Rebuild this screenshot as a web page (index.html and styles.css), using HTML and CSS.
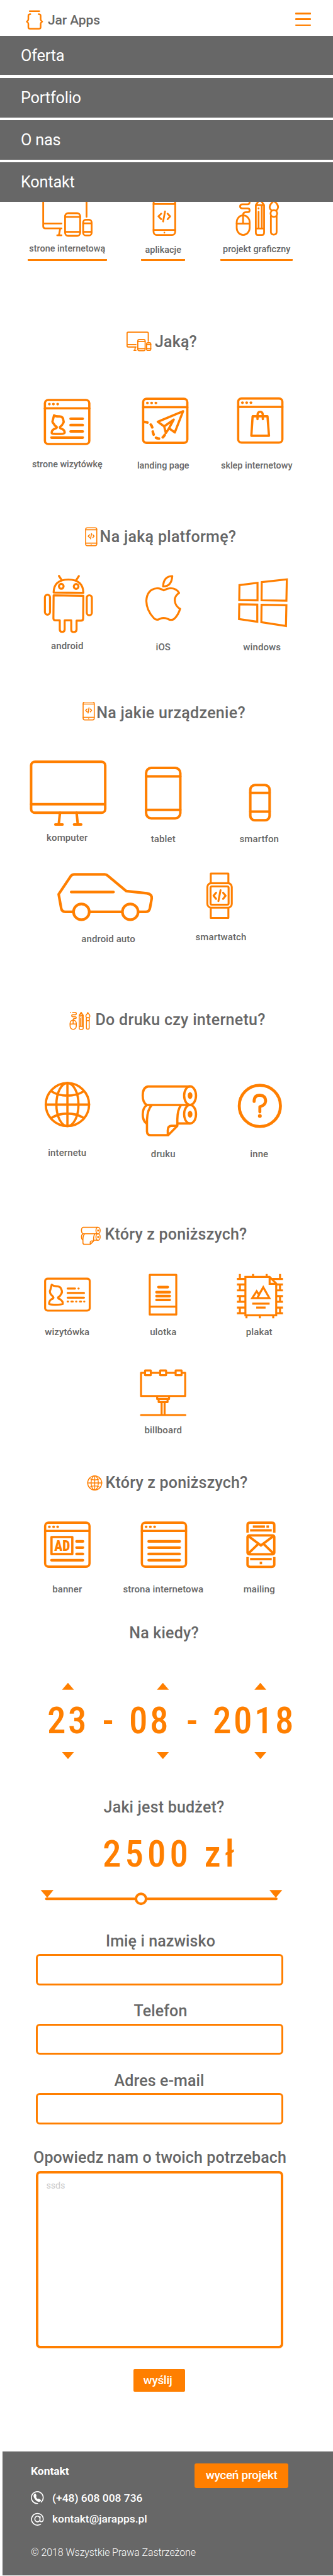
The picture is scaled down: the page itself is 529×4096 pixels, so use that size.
FILE: index.html
```
<!DOCTYPE html>
<html lang="pl">
<head>
<meta charset="utf-8">
<title>Jar Apps</title>
<link rel="stylesheet" href="styles.css">
</head>
<body>
<header class="top">
  <svg class="logo" viewBox="55 35 130 145"><g stroke-width="11"><path d="M86 47H153"/><path d="M91 68Q77 68 77 80V104Q77 113 66 119Q77 125 77 134V158Q77 169 89 169H150Q162 169 162 158V134Q162 125 173 119Q162 113 162 104V80Q162 68 148 68"/></g></svg>
  <span class="brand">Jar Apps</span>
  <span class="burger"><i></i><i></i><i></i></span>
</header>
<nav class="menu">
  <a>Oferta</a>
  <a>Portfolio</a>
  <a>O nas</a>
  <a>Kontakt</a>
</nav>
<main>
  <div class="row row-what">
    <figure>
      <svg viewBox="90.4 1142 452 208" preserveAspectRatio="none"><g id="devices"><path d="M288 1292H212Q202 1292 202 1280V1132Q202 1120 212 1120H396Q406 1120 406 1132V1226M202 1264H288M282 1292L276 1330M268 1331H288"/><rect x="305" y="1206" width="71" height="128" rx="14" ry="18"/><path d="M305 1227H376M305 1311H376"/><rect x="390" y="1243" width="40" height="89" rx="12" ry="16"/><path d="M390 1263H430M390 1311H430"/></g></svg>
      <figcaption class="w1">strone internetową</figcaption>
    </figure>
    <figure>
      <svg viewBox="542.4 1142 452 208" preserveAspectRatio="none"><g id="app"><rect x="723" y="1132" width="102" height="197" rx="14" ry="18"/><path d="M723 1154H825M723 1301H825M759 1209L746 1224L759 1240M777 1196L768 1253M789 1209L801 1224L789 1240"/><ellipse class="dot" cx="774" cy="1316" rx="4" ry="5"/></g></svg>
      <figcaption class="w2">aplikacje</figcaption>
    </figure>
    <figure>
      <svg viewBox="994.4 1142 452 208" preserveAspectRatio="none"><g id="tools"><rect x="1113" y="1218" width="61" height="111" rx="30.500" ry="40"/><path d="M1113 1265H1174M1143 1265V1218Q1143 1200 1156 1200H1164Q1174 1200 1174 1190Q1174 1179 1164 1179H1140Q1129 1179 1129 1168Q1129 1156 1140 1156H1164Q1174 1156 1174 1142Q1174 1127 1164 1127H1138M1117 1127H1119"/><path d="M1203 1160L1222 1127L1242 1160V1314Q1242 1329 1232 1329H1213Q1203 1329 1203 1314ZM1203 1160H1242M1203 1293H1242M1231 1162V1292M1216 1198V1292M1216 1178V1180"/><path d="M1277 1190Q1267 1180 1268 1170Q1270 1155 1282 1143Q1288 1135 1288 1127Q1288 1140 1298 1147Q1308 1160 1308 1172Q1307 1183 1299 1192"/><ellipse cx="1288" cy="1208" rx="15.500" ry="19"/><path d="M1274 1222V1312Q1274 1327 1287.500 1327Q1301 1327 1301 1312V1222"/></g></svg>
      <figcaption class="w3">projekt graficzny</figcaption>
    </figure>
  </div>

  <h2 class="h-which"><svg viewBox="590 103 130 156.900" preserveAspectRatio="none"><use href="#devices" transform="matrix(.489 0 0 .597 499.700 -556.200)"/></svg>Jaką?</h2>
  <div class="row row-which">
    <figure>
      <svg viewBox="90.4 555 452 345" preserveAspectRatio="none"><rect x="210" y="581" width="209" height="305" rx="16" ry="22"/><path d="M210 639H419"/><g class="dot"><ellipse cx="231" cy="610" rx="6.500" ry="9"/><ellipse cx="250" cy="610" rx="6.500" ry="9"/><ellipse cx="270" cy="610" rx="6.500" ry="9"/></g><path d="M253 687L247 722Q243 735 251 745Q256 760 264 766Q269 772 262 777Q241 786 242 808Q242 815 250 815Q272 818 294 815Q303 813 303 806Q303 786 283 777Q278 772 282 766Q292 757 294 746Q301 735 297 723Q296 695 278 695Q260 696 253 687Z"/><path class="bold" d="M331 711H388M331 755H388M331 799H388M241 842H388"/></svg>
      <figcaption>strone wizytówkę</figcaption>
    </figure>
    <figure>
      <svg viewBox="542.4 555 452 345" preserveAspectRatio="none"><rect x="674" y="573" width="208" height="305" rx="16" ry="22"/><path d="M674 631H882"/><g class="dot"><ellipse cx="694" cy="602" rx="6.500" ry="9"/><ellipse cx="714" cy="602" rx="6.500" ry="9"/><ellipse cx="734" cy="602" rx="6.500" ry="9"/></g><path d="M862 659L743 732L773 764L781 810L796 777L823 806ZM773 764L818 717L796 777"/><path class="bold dash" d="M679 733Q717 738 718 785Q722 848 748 849Q770 848 779 812"/></svg>
      <figcaption>landing page</figcaption>
    </figure>
    <figure>
      <svg viewBox="994.4 555 452 345" preserveAspectRatio="none"><rect x="1120" y="571" width="208" height="305" rx="16" ry="22"/><path d="M1120 629H1328"/><g class="dot"><ellipse cx="1140" cy="600" rx="6.500" ry="9"/><ellipse cx="1160" cy="600" rx="6.500" ry="9"/><ellipse cx="1180" cy="600" rx="6.500" ry="9"/></g><path d="M1188 694H1258L1265 829H1182ZM1211 714V688Q1211 663 1224 663Q1236 663 1236 688V714"/></svg>
      <figcaption class="shop">sklep internetowy</figcaption>
    </figure>
  </div>

  <h2 class="h-platform"><svg viewBox="395 102.600 72 156.900" preserveAspectRatio="none"><use href="#app" transform="matrix(.514 0 0 .629 32.400 -595.500)"/></svg>Na jaką platformę?</h2>
  <div class="row row-platform">
    <figure>
      <svg viewBox="90.4 440 452 415" preserveAspectRatio="none"><path d="M251 567Q252 478 320 477Q390 478 391 569ZM276 452L289 481M370 453L357 482"/><ellipse cx="287" cy="524" rx="11" ry="17"/><ellipse cx="357" cy="525" rx="11" ry="17"/><path d="M251 587L391 590L390 746Q390 762 380 762H359V824Q358 841 346 841Q334 841 334 826V760H303V824Q303 840 291 840Q280 840 280 824V760H260Q250 760 250 746Z"/><rect x="210" y="582" width="24" height="139" rx="12" ry="18"/><rect x="407" y="586" width="24" height="139" rx="12" ry="18"/></svg>
      <figcaption>android</figcaption>
    </figure>
    <figure>
      <svg viewBox="542.4 440 452 415" preserveAspectRatio="none"><path d="M811 453Q770 455 768 525Q808 525 811 453Z"/><path d="M771 552Q788 538 803 537Q832 539 843 570Q822 592 823 622Q825 662 848 680Q840 722 820 750Q806 764 790 750Q771 738 752 750Q736 764 724 744Q690 690 689 625Q692 545 738 538Q752 537 771 552Z"/></svg>
      <figcaption>iOS</figcaption>
    </figure>
    <figure>
      <svg viewBox="994.4 440 452 415" preserveAspectRatio="none"><path class="sharp" d="M1126 516L1211 500V621L1125 619ZM1231 495L1349 476L1347 624L1230 621ZM1125 649L1210 651V770L1124 751ZM1230 652L1347 655L1345 799L1229 773Z"/></svg>
      <figcaption>windows</figcaption>
    </figure>
  </div>

  <h2 class="h-device"><svg viewBox="382 1324.300 72 156.900" preserveAspectRatio="none"><use href="#app" transform="matrix(.514 0 0 .629 19.400 613.500)"/></svg>Na jakie urządzenie?</h2>
  <div class="row row-device">
    <figure>
      <svg viewBox="90.4 205 452 440" preserveAspectRatio="none"><rect x="145" y="222" width="349" height="330" rx="18" ry="24"/><path d="M145 497H494M281 552L275 628M359 552L365 628M259 628H293M347 628H381"/></svg>
      <figcaption>komputer</figcaption>
    </figure>
    <figure>
      <svg viewBox="542.4 205 452 440" preserveAspectRatio="none"><rect x="688" y="262" width="161" height="326" rx="24" ry="33"/><path d="M688 317H849M688 533H849"/></svg>
      <figcaption>tablet</figcaption>
    </figure>
    <figure>
      <svg viewBox="994.4 205 452 440" preserveAspectRatio="none"><rect x="1177" y="373" width="91" height="228" rx="22" ry="30"/><path d="M1177 424H1268M1177 545H1268"/></svg>
      <figcaption>smartfon</figcaption>
    </figure>
  </div>
  <div class="row row-extra">
    <figure>
      <svg viewBox="230 930 560 330" preserveAspectRatio="none"><path d="M344 1194H306Q290 1194 287 1172L275 1080L331 965Q338 952 348 952H492Q500 952 506 960L593 1060L690 1074Q715 1080 713 1108L705 1168Q702 1194 685 1194H650M420 1194H574M334 1066H533"/><ellipse cx="382" cy="1194" rx="37" ry="51"/><ellipse cx="612" cy="1194" rx="37" ry="51"/></svg>
      <figcaption>android auto</figcaption>
    </figure>
    <figure>
      <svg class="thin" viewBox="790 930 500 330" preserveAspectRatio="none"><rect x="975" y="1009" width="115" height="158" rx="18" ry="24"/><rect x="990" y="1030" width="85" height="118" rx="6" ry="8"/><path d="M991 1006V946H1074V1006M991 1172V1233H1074V1172M1016 1070L1004 1090L1016 1110M1037 1054L1027 1124M1049 1070L1061 1090L1049 1110"/></svg>
      <figcaption>smartwatch</figcaption>
    </figure>
  </div>

  <h2 class="h-print"><svg viewBox="320 90.600 120 156.900" preserveAspectRatio="none"><use href="#tools" transform="matrix(.478 0 0 .586 -202.100 -545.100)"/></svg>Do druku czy internetu?</h2>
  <div class="row row-print">
    <figure>
      <svg viewBox="90.4 585 452 395" preserveAspectRatio="none"><g id="globe"><ellipse cx="316" cy="752" rx="102" ry="149"/><ellipse cx="316" cy="752" rx="52" ry="149"/><path d="M316 603V901M214 752H418M240 660Q272 690 316 690Q360 690 393 660M240 845Q272 814 316 814Q360 814 393 845"/></g></svg>
      <figcaption>internetu</figcaption>
    </figure>
    <figure>
      <svg viewBox="542.4 585 452 395" preserveAspectRatio="none"><g id="rolls"><path d="M895 627H697Q672 632 672 690Q672 737 690 755H895M895 883H836M690 883Q672 865 672 819Q673 772 692 755M714 757Q692 790 692 870V938Q693 964 710 964H792L835 900V870Q834 790 852 757M790 964V930Q790 900 806 899H834"/><ellipse cx="895" cy="690" rx="28" ry="64"/><ellipse cx="895" cy="819" rx="28" ry="64"/><g class="dot"><ellipse cx="895" cy="690" rx="11" ry="24"/><ellipse cx="895" cy="819" rx="11" ry="24"/></g></g></svg>
      <figcaption>druku</figcaption>
    </figure>
    <figure>
      <svg class="thick" viewBox="994.4 585 452 395" preserveAspectRatio="none"><ellipse cx="1222" cy="761" rx="97" ry="143"/><path d="M1195 731Q1195 687 1222 687Q1250 690 1249 730Q1247 758 1222 767V803"/><ellipse class="dot" cx="1222" cy="831" rx="9" ry="13"/></svg>
      <figcaption>inne</figcaption>
    </figure>
  </div>

  <h2 class="h-paper"><svg viewBox="374 71.200 108 146.400" preserveAspectRatio="none"><use href="#rolls" transform="matrix(.351 0 0 .325 148.200 -105.900)"/></svg>Który z poniższych?</h2>
  <div class="row row-paper">
    <figure>
      <svg viewBox="90.4 385 452 305" preserveAspectRatio="none"><rect x="211" y="426" width="210" height="207" rx="12" ry="15"/><path d="M242 465L236 497Q230 510 238 528Q247 540 250 547Q252 554 240 560Q229 570 230 590Q240 595 262 595Q286 595 294 590Q296 572 282 560Q270 554 272 547Q282 540 286 527Q294 513 288 498Q285 475 262 475Q250 475 242 465Z"/><path d="M317 490H352M368 490H369M317 519H394M317 549H394M317 574H319M335 574H341M357 574H358M375 574H380M395 574H395.500"/></svg>
      <figcaption>wizytówka</figcaption>
    </figure>
    <figure>
      <svg viewBox="542.4 385 452 305" preserveAspectRatio="none"><path d="M705 402H830V658H705ZM705 607H830"/><path class="bold" d="M746 481H790M737 514H799M737 539H799M737 564H799"/></svg>
      <figcaption>ulotka</figcaption>
    </figure>
    <figure>
      <svg class="butt" viewBox="994.4 385 452 305" preserveAspectRatio="none"><path d="M1114 428H1154M1114 464H1154M1114 502H1154M1114 539H1154M1114 576H1154M1114 613H1154M1114 650H1154M1128 396V428M1128 464V502M1128 539V576M1128 613V650M1190 396V415M1254 396V415M1317 396V428M1280 428H1331M1299 464H1331M1299 502H1331M1299 539H1331M1299 576H1331M1299 613H1331M1299 650H1331M1317 464V502M1317 539V576M1317 613V650M1159 664V683M1222 664V683M1285 664V683"/><path d="M1154 415H1268L1299 458V663H1154ZM1268 415V460H1299M1186 552L1207 508L1218 530L1238 482L1267 552ZM1211 548L1219 530"/><path d="M1186 588H1268M1205 613H1249"/></svg>
      <figcaption>plakat</figcaption>
    </figure>
  </div>
  <div class="row row-board">
    <figure>
      <svg viewBox="542.4 1005 452 320" preserveAspectRatio="none"><path d="M682 1037H664V1187H872V1037H855M712 1037H752M784 1037H824M683 1022H710V1052H683ZM754 1022H782V1052H754ZM827 1022H855V1052H827ZM740 1190V1206H796V1190M747 1208V1226H789V1208M761 1228V1308M775 1228V1308M664 1310H873"/></svg>
      <figcaption>billboard</figcaption>
    </figure>
  </div>

  <h2 class="h-web"><svg viewBox="402 54.500 86 156.900" preserveAspectRatio="none"><use href="#globe" transform="matrix(.326 0 0 .33 341.900 -115.400)"/></svg>Który z poniższych?</h2>
  <div class="row row-web">
    <figure>
      <svg viewBox="90.4 392 452 340" preserveAspectRatio="none"><rect x="211" y="410" width="209" height="305" rx="16" ry="22"/><path d="M211 467H420M241 510H339V628H241Z"/><g class="dot"><ellipse cx="231" cy="439" rx="6.500" ry="9"/><ellipse cx="251" cy="439" rx="6.500" ry="9"/><ellipse cx="270" cy="439" rx="6.500" ry="9"/></g><path class="bold" d="M359 540H389M359 583H389M359 627H389M241 670H389"/><text transform="translate(291 606) scale(2.964 4.357)" text-anchor="middle" textLength="25" lengthAdjust="spacingAndGlyphs">AD</text></svg>
      <figcaption>banner</figcaption>
    </figure>
    <figure>
      <svg viewBox="542.4 392 452 340" preserveAspectRatio="none"><rect x="668" y="410" width="208" height="305" rx="16" ry="22"/><path d="M668 467H876"/><g class="dot"><ellipse cx="688" cy="439" rx="6.500" ry="9"/><ellipse cx="708" cy="439" rx="6.500" ry="9"/><ellipse cx="728" cy="439" rx="6.500" ry="9"/></g><path class="bold" d="M700 540H846M700 583H846M700 627H846M700 670H846"/></svg>
      <figcaption>strona internetowa</figcaption>
    </figure>
    <figure>
      <svg class="butt" viewBox="994.4 392 452 340" preserveAspectRatio="none"><path d="M1164 479V425Q1164 410 1176 410H1278Q1290 410 1290 425V479M1189 437H1246M1253 437H1265M1176 463H1278M1168 503L1227 568L1286 503M1168 624L1214 558M1286 624L1240 558M1164 648V702Q1164 716 1176 716H1278Q1290 716 1290 702V648M1176 663H1278M1227 681V698"/><rect x="1164" y="498" width="126" height="131" rx="8" ry="11"/></svg>
      <figcaption>mailing</figcaption>
    </figure>
  </div>

  <h2 class="h-plain">Na kiedy?</h2>
  <div class="date">
    <div class="steps up"><i></i><i></i><i></i></div>
    <div class="digits"><span>23</span><span>-</span><span>08</span><span>-</span><span>2018</span></div>
    <div class="steps down"><i></i><i></i><i></i></div>
  </div>

  <h2 class="h-plain">Jaki jest budżet?</h2>
  <div class="price">2500 zł</div>
  <svg class="slider" viewBox="0 0 529 30.600"><path d="M73.500 17.300H439"/><circle cx="224" cy="17.300" r="8"/><path class="dot" d="M64.500 3.200H85L75 15.500ZM428 3.200H448.500L438.200 15.500Z"/></svg>

  <form>
    <label class="f-name" for="name">Imię i nazwisko</label>
    <input id="name" type="text">
    <label class="f-phone" for="phone">Telefon</label>
    <input id="phone" type="text">
    <label class="f-mail" for="mail">Adres e-mail</label>
    <input id="mail" type="text">
    <label class="f-needs" for="needs">Opowiedz nam o twoich potrzebach</label>
    <div id="needs" class="area">ssds</div>
    <button type="button">wyślij</button>
  </form>
</main>
<footer>
  <div class="contact">
    <h3>Kontakt</h3>
    <p><svg viewBox="0 0 21 21"><path d="M10.800 19.700A9.400 9.400 0 1 1 16.500 17.300"/><path class="dot" d="M6 4.300Q7.700 3.500 8.300 5.500L9 7.500Q9.200 8.400 8.200 9Q8.800 11.300 11 12.800Q12 11.600 13 12.200L15.600 13.700Q17 15 15.400 16.200Q13 18 9.600 15.900Q5.800 13.300 4.500 9.300Q3.700 5.800 6 4.300Z"/></svg>(+48) 608 008 736</p>
    <p><svg viewBox="0 0 21 21"><path d="M15.500 18.600A9.300 9.300 0 1 1 19.700 10.500Q19.500 14.800 16.600 14.800Q14.300 14.700 14.400 12L14.800 6.800M14.500 9.500A4.100 4.600 0 1 0 13.800 13"/></svg>kontakt@jarapps.pl</p>
    <small>© 2018 Wszystkie Prawa Zastrzeżone</small>
  </div>
  <a class="cta">wyceń projekt</a>
</footer>
</body>
</html>
```
FILE: styles.css
```
* { box-sizing: border-box; }
body {
  margin: 0;
  width: 529px;
  height: 4096px;
  overflow: hidden;
  background: #fff;
  color: #676767;
  font-family: Roboto, sans-serif;
  font-weight: 500;
}
svg {
  display: block;
  overflow: hidden;
  fill: none;
  stroke: #ff7f00;
  stroke-width: 3.6px;
  stroke-linecap: round;
  stroke-linejoin: round;
}
main path, main rect, main ellipse { vector-effect: non-scaling-stroke; }
.dot { fill: #ff7f00; stroke: none; }
.bold { stroke-width: 4.2px; }
.dash { stroke-dasharray: 5 6.5; }
.sharp { stroke-linejoin: miter; }
.butt { stroke-width: 3.3px; stroke-linecap: butt; stroke-linejoin: miter; }
.thin { stroke-width: 3.1px; }
.thick { stroke-width: 4.7px; }
svg text {
  fill: #ff7f00;
  stroke: none;
  font-family: "Roboto Condensed", Roboto, sans-serif;
  font-size: 24px;
  font-weight: 900;
}

/* header */
.top {
  display: flex;
  align-items: flex-start;
  height: 56.5px;
  padding: 14.9px 35.500px 0 40.200px;
}
.logo { width: 29.800px; height: 33.300px; }
.brand {
  margin: 5.600px 0 0 6px;
  font-size: 21px;
  line-height: 24px;
  letter-spacing: -.1px;
}
.burger { display: grid; gap: 6.200px; margin: 5.500px 0 0 auto; }
.burger i { width: 25px; height: 2.900px; border-radius: 1px; background: #ff7f00; }
.menu { display: grid; gap: 4.200px; height: 264.4px; }
.menu a {
  width: 528.500px;
  height: 62.950px;
  padding-left: 33px;
  background: #676767;
  color: #fff;
  font-size: 25.300px;
  font-weight: 400;
  line-height: 64px;
  letter-spacing: -.2px;
}

/* questionnaire: one band per row */
main {
  display: grid;
  grid-template-rows:
    205.3px 103.8px 206px 77.4px 203px 90.7px 178.3px 219px 113.5px 227.5px
    77.2px 152.4px 164.7px 77.5px 161.4px 97.2px 180.3px 56.6px 89.1px 67.5px 829.2px;
}
.row {
  display: grid;
  grid-template-columns: repeat(3, 152.500px);
  align-items: start;
  padding-left: 30.500px;
}
figure { margin: 0; }
figure svg { width: 100%; }
figcaption {
  margin-top: var(--gap);
  font-size: 15px;
  line-height: 20px;
  letter-spacing: .1px;
  text-align: center;
  white-space: nowrap;
}
figure + figure figcaption { margin-top: calc(var(--gap) + 1.500px); }

.row-what { --gap: 0px; }
.row-what svg { height: 58.5px; stroke-width: 2.800px; }
.row-what figcaption, .row-what figure + figure figcaption {
  height: 35.400px;
  margin: 0 auto;
  padding-top: 7px;
  border-bottom: 3.600px solid #ff7f00;
  border-radius: 1px;
  font-size: 14.4px;
  letter-spacing: 0;
}
.row-what .w1 { width: 126.500px; }
.row-what .w2.w2 { width: 70px; padding-top: 8.400px; }
.row-what figure + figure .w3 { width: 115px; padding-top: 8px; transform: translateX(-4px); }
.row-which { --gap: 20.2px; }
.row-which svg { height: 79.2px; }
.row-which figcaption { font-size: 14.4px; letter-spacing: 0; }
.row-which .shop { padding-right: 8px; }
.row-platform { --gap: 8.500px; }
.row-platform svg { height: 95.2px; stroke-width: 3.200px; }
.row-platform figure:last-child figcaption { padding-left: 9px; }
.row-device { --gap: 6.800px; }
.row-device svg { height: 108.2px; stroke-width: 4px; }
.row-extra { --gap: 16.600px; grid-template-columns: 189px 168.700px; padding-left: 77.600px; }
.row-extra svg { height: 81.100px; }
.row-extra svg:not(.thin) { stroke-width: 4.200px; }
.row-extra figure + figure figcaption { margin-top: 13.400px; }
.row-print { --gap: 14.700px; }
.row-print svg { height: 90.700px; }
.row-paper { --gap: 10.900px; }
.row-paper svg { height: 75px; stroke-width: 3.200px; }
.row-paper figure + figure figcaption, .row-web figure + figure figcaption { margin-top: var(--gap); }
.row-board { --gap: 10.200px; grid-template-columns: 152.500px; padding-left: 183px; }
.row-board svg { height: 78.700px; stroke-width: 3.200px; }
.row-web { --gap: 22.300px; }
.row-web svg { height: 78px; }
.row-web svg.butt { stroke-width: 3.800px; }

h2 {
  display: flex;
  height: 36px;
  margin: 0;
  font-size: 25px;
  font-weight: 500;
  line-height: 36px;
  letter-spacing: .2px;
  white-space: nowrap;
}
h2 svg { flex: none; height: 36px; stroke-width: 1.800px; }
.h-which { padding-left: 199px; }
.h-which svg { width: 43.900px; margin-right: 3px; }
.h-platform { padding-left: 133.300px; letter-spacing: .3px; }
.h-platform svg { width: 24.300px; margin-right: 1px; stroke-width: 1.600px; }
.h-device { padding-left: 128.900px; letter-spacing: .3px; }
.h-device svg { width: 24.300px; margin-right: 0; stroke-width: 1.600px; }
.h-print { padding-left: 108px; letter-spacing: .3px; }
.h-print svg { width: 40.500px; margin-right: 3px; stroke-width: 1.550px; }
.h-paper { padding-left: 126.200px; }
.h-paper svg { width: 36.400px; margin-right: 4px; stroke-width: 1.600px; }
.h-web { padding-left: 135.600px; }
.h-web svg { width: 29px; margin-right: 3px; stroke-width: 1.400px; }
.h-plain { justify-content: center; padding-right: 8px; }

/* date and budget */
.steps { display: grid; grid-template-columns: 150.8px 154.8px 19px; padding-left: 98.600px; }
.steps i { width: 18.800px; height: 11px; background: #ff7f00; clip-path: polygon(50% 0, 100% 100%, 0 100%); }
.down i { clip-path: polygon(0 0, 100% 0, 50% 100%); }
.digits, .price {
  color: #ff7f00;
  font-family: "Roboto Condensed", Roboto, sans-serif;
  font-size: 59px;
  line-height: 70px;
  letter-spacing: 3.500px;
  white-space: nowrap;
}
.digits {
  display: grid;
  grid-template-columns: 87.500px 42.500px 91px 42px 130px;
  margin: 14.600px 0 14.800px;
  padding-left: 75px;
}
.price { padding-left: 163px; letter-spacing: 6px; }
.slider { width: 529px; height: 30.600px; stroke-width: 4px; }
.slider circle { fill: #fff; }

/* contact form */
form { display: flex; flex-direction: column; width: 449.500px; padding-left: 56.500px; }
label {
  height: 36px;
  font-size: 25px;
  line-height: 36px;
  letter-spacing: .1px;
  text-align: center;
  white-space: nowrap;
}
input {
  width: 393px;
  height: 49.800px;
  margin: 1.700px 0 23.200px;
  padding: 0 12px;
  border: 3.700px solid #ff7f00;
  border-radius: 6px;
  background: #fff;
}
#mail { margin-bottom: 34.900px; }
.f-name, .f-phone { padding-left: 4px; }
.f-needs { margin: 0 -10px 0 -8px; }
.area {
  height: 281.700px;
  margin-top: 3px;
  padding: 9.800px 13px;
  border: 4px solid #ff7f00;
  border-radius: 7px;
  color: #ccc;
  font-size: 14.500px;
  font-weight: 400;
  line-height: 20px;
  letter-spacing: -.2px;
}
button {
  width: 82px;
  height: 36px;
  margin: 33.200px 0 0 155px;
  padding: 0 4px 0 0;
  border: 0;
  border-radius: 2px;
  background: #ff7f00;
  color: #fff;
  font: 500 19px/36px Roboto, sans-serif;
  letter-spacing: -.3px;
}

/* footer */
footer {
  display: flex;
  justify-content: space-between;
  align-items: flex-start;
  height: 197px;
  margin-left: 3.700px;
  padding: 18.400px 70.800px 0 45.300px;
  background: #676767;
  color: #fff;
}
footer svg { width: 21px; height: 21px; margin-right: 13px; stroke: #fff; stroke-width: 1.600px; }
footer .dot { fill: #fff; }
h3 { margin: 1.900px 0 22px; font-size: 17.400px; font-weight: 700; line-height: 20px; }
.contact p {
  display: flex;
  align-items: center;
  height: 22px;
  margin: 0 0 11.700px;
  font-size: 17.400px;
  line-height: 20px;
}
.contact small { display: block; margin-top: 33px; font-size: 16px; font-weight: 300; line-height: 20px; letter-spacing: -.1px; white-space: nowrap; }
.cta {
  flex: none;
  width: 149.200px;
  height: 38.800px;
  margin-left: -60px;
  border-radius: 3px;
  background: #ff7f00;
  font-size: 19px;
  line-height: 38px;
  letter-spacing: -.3px;
  text-align: center;
}
```
